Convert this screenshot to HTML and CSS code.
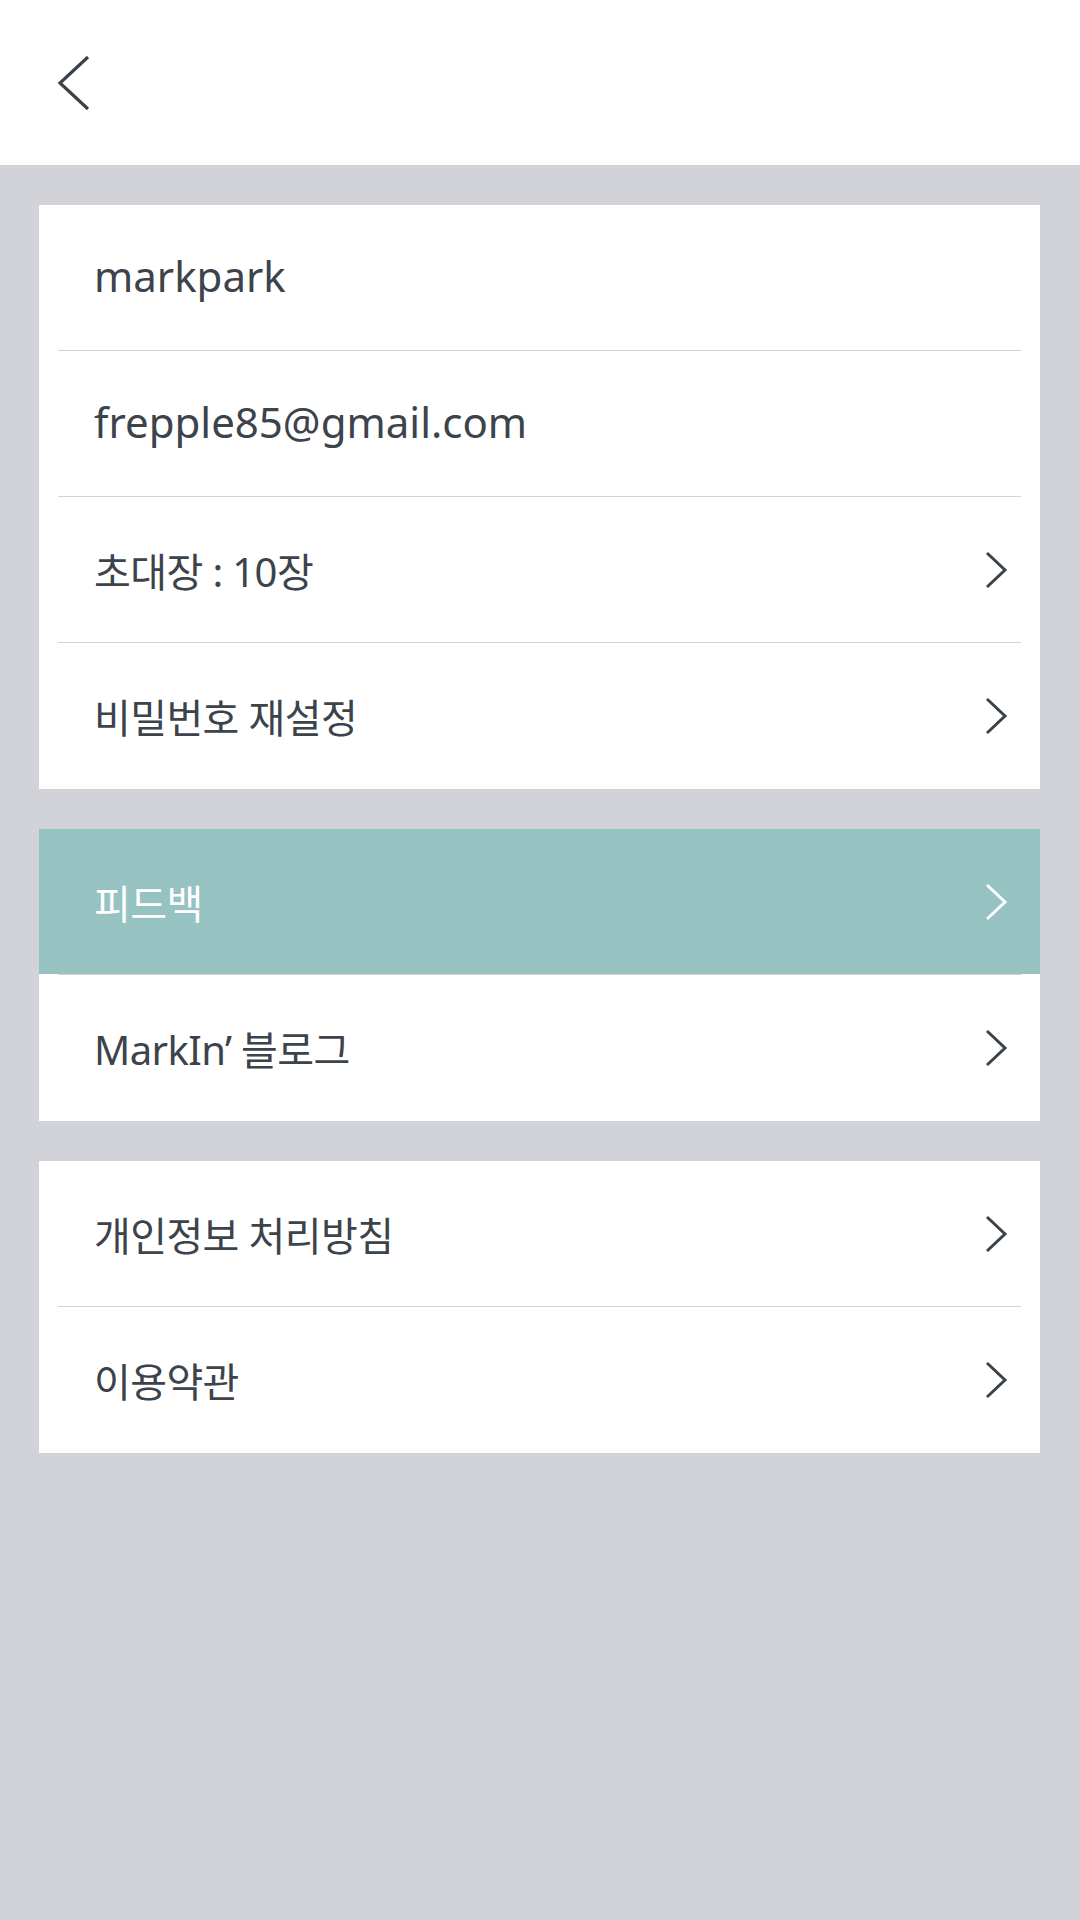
FILE: index.html
```html
<!DOCTYPE html>
<html lang="ko">
<head>
<meta charset="utf-8">
<link rel="stylesheet" href="styles.css">
</head>
<body>
<header class="topbar">
  <svg class="back" width="34" height="56" viewBox="0 0 34 56"><polyline points="31,2 3,28 31,54" fill="none" stroke="#3b424a" stroke-width="3.2"/></svg>
</header>
<main class="content">
  <section class="card">
    <div class="row"><span class="label latin">markpark</span></div>
    <div class="divider"></div>
    <div class="row"><span class="label latin">frepple85@gmail.com</span></div>
    <div class="divider"></div>
    <div class="row"><span class="label">초대장 : 10장</span><svg class="chev" width="24" height="38" viewBox="0 0 24 38"><polyline points="3,2 21,19 3,36" fill="none" stroke="#3b424a" stroke-width="3"/></svg></div>
    <div class="divider"></div>
    <div class="row"><span class="label">비밀번호 재설정</span><svg class="chev" width="24" height="38" viewBox="0 0 24 38"><polyline points="3,2 21,19 3,36" fill="none" stroke="#3b424a" stroke-width="3"/></svg></div>
  </section>
  <section class="card">
    <div class="row active"><span class="label">피드백</span><svg class="chev" width="24" height="38" viewBox="0 0 24 38"><polyline points="3,2 21,19 3,36" fill="none" stroke="#ffffff" stroke-width="3"/></svg></div>
    <div class="divider"></div>
    <div class="row"><span class="label">MarkIn’ 블로그</span><svg class="chev" width="24" height="38" viewBox="0 0 24 38"><polyline points="3,2 21,19 3,36" fill="none" stroke="#3b424a" stroke-width="3"/></svg></div>
  </section>
  <section class="card">
    <div class="row"><span class="label">개인정보 처리방침</span><svg class="chev" width="24" height="38" viewBox="0 0 24 38"><polyline points="3,2 21,19 3,36" fill="none" stroke="#3b424a" stroke-width="3"/></svg></div>
    <div class="divider"></div>
    <div class="row"><span class="label">이용약관</span><svg class="chev" width="24" height="38" viewBox="0 0 24 38"><polyline points="3,2 21,19 3,36" fill="none" stroke="#3b424a" stroke-width="3"/></svg></div>
  </section>
</main>
</body>
</html>
```
FILE: styles.css
```css
html, body {
  margin: 0;
  padding: 0;
}
body {
  width: 1080px;
  min-height: 1920px;
  background: #d2d3d8;
  font-family: "Noto Sans", "Noto Sans CJK KR", sans-serif;
  color: #3c434b;
}
.topbar {
  height: 165px;
  background: #ffffff;
  display: flex;
  align-items: center;
  padding-left: 57px;
  box-sizing: border-box;
}
.back {
  display: block;
}
.content {
  display: flex;
  flex-direction: column;
  gap: 40px;
  padding: 40px 40px 0 39px;
}
.card {
  background: #ffffff;
  display: flex;
  flex-direction: column;
  padding-bottom: 1px;
}
.row {
  height: 145px;
  display: flex;
  align-items: center;
  justify-content: space-between;
  padding: 0 32px 0 55px;
  box-sizing: border-box;
}
.label {
  font-size: 40px;
  letter-spacing: -0.6px;
  white-space: nowrap;
}
.label.latin {
  font-size: 42px;
  letter-spacing: 0;
  margin-top: -4px;
}
.row.active {
  background: #96c2c1;
  color: #ffffff;
}
.chev {
  display: block;
}
.divider {
  height: 1px;
  margin: 0 19px;
  background: #d3d3d5;
}
```
